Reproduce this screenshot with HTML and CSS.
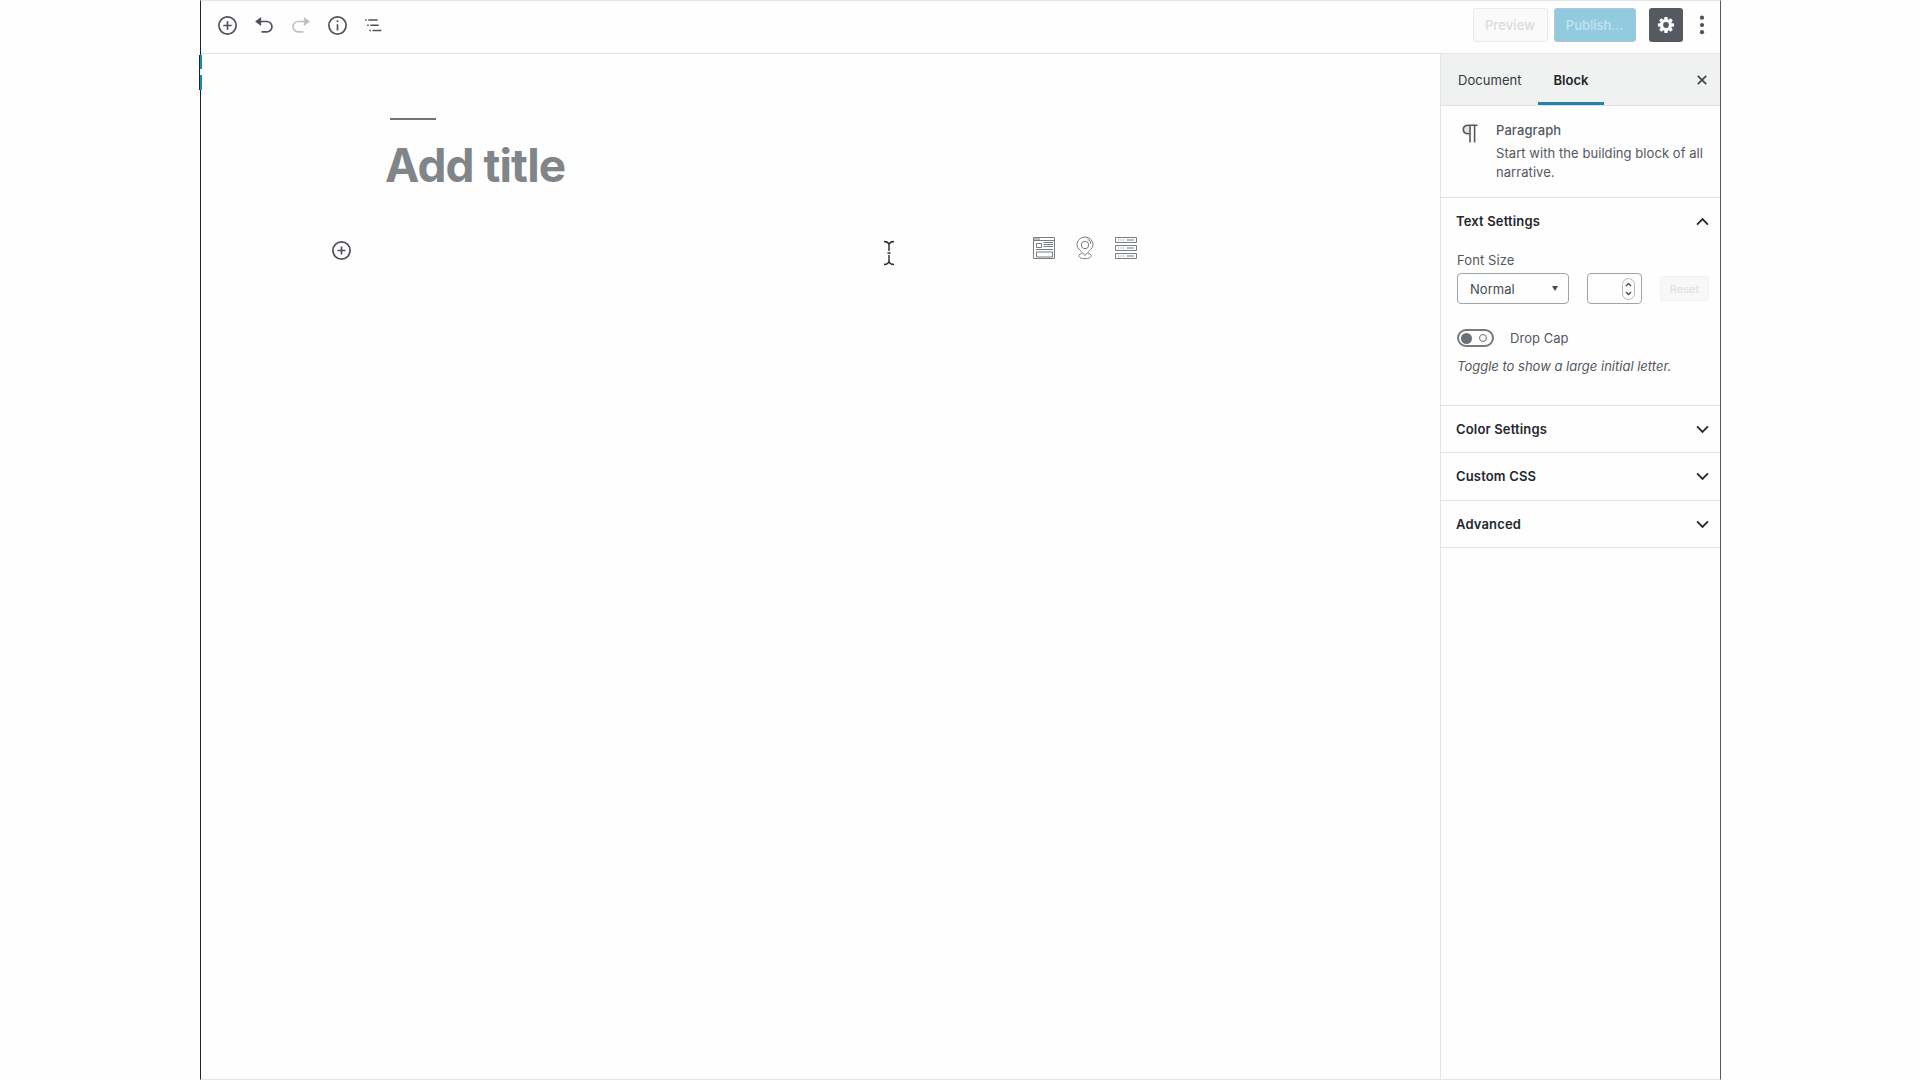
FILE: index.html
```html
<!DOCTYPE html>
<html lang="en">
<head>
<meta charset="utf-8">
<title>Add title</title>
<link rel="stylesheet" href="styles.css">
</head>
<body>
<div class="window">
  <span class="menu-marker"></span>
  <header class="toolbar">
    <div class="tools">
      <svg class="icon" viewBox="0 0 20 20"><circle cx="10" cy="10" r="8.2"/><path d="M10 6v8M6 10h8"/></svg>
      <svg class="icon" viewBox="0 0 20 20"><path d="M5 6.2h7.2a4.9 4.9 0 0 1 0 9.8H7.2"/><path class="fill" d="M1 6.2 6.8 2v8.4z"/></svg>
      <svg class="icon faded" viewBox="0 0 20 20"><path d="M15 6.2H7.8a4.9 4.9 0 0 0 0 9.8h5"/><path class="fill" d="M19 6.2 13.2 2v8.4z"/></svg>
      <svg class="icon" viewBox="0 0 20 20"><circle cx="10" cy="10" r="8.2"/><path d="M10 8.8v6M10 5v2"/></svg>
      <svg class="icon" viewBox="0 0 20 20"><path class="list" d="M2 4.7h1.5M5 4.7h9M4 9.7h1.5M7 9.7h8M6 14.8h1.5M9 14.8h8.5"/></svg>
    </div>
    <div class="actions">
      <button class="preview">Preview</button>
      <button class="publish">Publish...</button>
      <button class="gear"><svg viewBox="0 0 20 20"><g fill="#fff"><circle cx="10" cy="10" r="6.7"/><path d="M8.3 1h3.4l.5 4H7.8zM8.3 19h3.4l.5-4H7.8zM1 8.3v3.4l4 .5V7.8zM19 8.3v3.4l-4 .5V7.8z"/><path transform="rotate(45 10 10)" d="M8.3 1h3.4l.5 4H7.8zM8.3 19h3.4l.5-4H7.8zM1 8.3v3.4l4 .5V7.8zM19 8.3v3.4l-4 .5V7.8z"/></g><circle cx="10" cy="10" r="3.2" fill="#555960"/></svg></button>
      <svg class="dots" viewBox="0 0 6 20"><circle cx="3" cy="2.7" r="2.1"/><circle cx="3" cy="10" r="2.1"/><circle cx="3" cy="17.2" r="2.1"/></svg>
    </div>
  </header>
  <div class="body">
    <main class="canvas">
      <div class="rule"></div>
      <h1>Add title</h1>
      <div class="block-row">
        <svg class="icon inserter" viewBox="0 0 20 20"><circle cx="10" cy="10" r="8.2"/><path d="M10 6.2v7.6M6.2 10h7.6"/></svg>
        <div class="suggestions">
          <svg viewBox="0 0 24 24"><path d="M1.500 1.500h21v21h-21zM1.500 4.500h21M3 2v2M5 2v2M7 2v2M4.500 7.500h5v4h-5zM11.500 6.500H21M11.500 8.500H21M11.500 10.500H21M4 13.500h17M4.500 16h16v5h-16z"/></svg>
          <svg viewBox="0 0 24 24"><path d="M12 19.500C9 15.500 4 13 4 8.500a8 7.500 0 0 1 16 0c0 4.500-5 7-8 11zM14.500 3a6 6 0 0 1 3.500 5M9 17.500c-5 .8-4 5.200 3 5.200s8-4.400 3-5.200"/><circle cx="12" cy="9" r="3.7"/></svg>
          <svg viewBox="0 0 24 24"><path d="M1.500 1.500h21v5h-21zM1.500 9.500h21v5h-21zM1.500 17.500h21v5h-21zM4 4h1M6.500 4h1M9 4h1M12.500 4H20M4 12h1M6.500 12h1M9 12h1M12.500 12H20M4 20h1M6.500 20h1M9 20h1M12.500 20H20"/></svg>
        </div>
      </div>
      <svg class="cursor" viewBox="0 0 12 26"><path d="M1 1.500q4 0 5 3 1-3 5-3M6 4v7M6 15v7M1 24.500q4 0 5-3 1 3 5 3M4.500 13h3"/></svg>
    </main>
    <aside class="sidebar">
      <nav class="tabs">
        <span class="tab">Document</span>
        <span class="tab active">Block</span>
        <svg class="close" viewBox="0 0 12 12"><path d="m1.800 1.800 8.400 8.400M10.200 1.800l-8.400 8.400"/></svg>
      </nav>
      <section class="card">
        <svg class="pilcrow" viewBox="0 0 16 19"><path class="fill" d="M7 1v9.500C2.800 10.500.5 8.500.5 5.600S2.800 1 7 1z" fill-opacity=".15"/><path d="M15.500 1.300H6.500C3 1.300 1.300 3 1.300 5.500s1.700 4.300 5.700 4.300M8 1.300V18.500M12.600 1.300V18.500"/></svg>
        <div>
          <div class="name">Paragraph</div>
          <p>Start with the building block of all<br>narrative.</p>
        </div>
      </section>
      <section class="panel open">
        <div class="heading"><span>Text Settings</span><svg class="chevron" viewBox="0 0 12 8"><path d="m1 6.800 5-5 5 5"/></svg></div>
        <div class="label">Font Size</div>
        <div class="size-row">
          <div class="select"><span>Normal</span><svg viewBox="0 0 6 5"><path d="M0 0h6L3 5z"/></svg></div>
          <div class="number"><svg viewBox="0 0 13 22"><rect x=".5" y=".5" width="12" height="21" rx="6"/><path d="m4 8 2.500-2.500L9 8M4 14l2.500 2.500L9 14"/></svg></div>
          <button class="reset">Reset</button>
        </div>
        <div class="toggle-row"><span class="toggle"></span><span>Drop Cap</span></div>
        <div class="hint">Toggle to show a large initial letter.</div>
      </section>
      <section class="panel"><div class="heading"><span>Color Settings</span><svg class="chevron" viewBox="0 0 12 8"><path d="m1 1.200 5 5 5-5"/></svg></div></section>
      <section class="panel"><div class="heading"><span>Custom CSS</span><svg class="chevron" viewBox="0 0 12 8"><path d="m1 1.200 5 5 5-5"/></svg></div></section>
      <section class="panel"><div class="heading"><span>Advanced</span><svg class="chevron" viewBox="0 0 12 8"><path d="m1 1.200 5 5 5-5"/></svg></div></section>
    </aside>
  </div>
</div>
</body>
</html>
```
FILE: styles.css
```css
* { box-sizing: border-box; }
body { margin: 0; background: #fefefe; font-family: Inter, "Liberation Sans", sans-serif; font-size: 13px; letter-spacing: .04px; color: #53585f; }
svg { display: block; flex: none; fill: none; }
button { font: inherit; padding: 0; border-radius: 3px; }
.window { position: relative; width: 1521px; height: 1080px; margin-left: 200px; border: 1px solid #e2e4e7; border-left-color: #23202e; border-right-color: #555a60; display: flex; flex-direction: column; }
.menu-marker { position: absolute; left: -2px; top: 54px; width: 3px; height: 35px; border-left: 1px solid #23202e; background: linear-gradient(#168cbe 14px, #fff 14px, #fff 20px, #168cbe 20px); }
.toolbar { height: 53px; border-bottom: 1px solid #e2e4e7; display: flex; justify-content: space-between; align-items: flex-start; padding: 7px 15px 0 16px; }
.tools { display: flex; gap: 15.6px; padding-top: 7px; }
.icon { width: 21px; height: 21px; stroke: #4d5258; stroke-width: 1.6; }
.icon .fill { fill: #4d5258; stroke: none; }
.faded { opacity: .35; }
.list { stroke-width: 1.4; }
.actions { display: flex; align-items: center; }
.preview { width: 75px; height: 34px; border: 1px solid #e8eaeb; background: #fafafa; color: #d9dcdc; font-weight: 500; letter-spacing: .1px; }
.publish { width: 82px; height: 34px; margin-left: 6px; border: 1px solid #a9c9d4; background: #92cbe0; color: #c2e5f1; font-weight: 500; }
.gear { width: 34px; height: 34px; margin-left: 13px; border: 0; background: #555960; display: grid; place-items: center; }
.gear svg { width: 18px; height: 18px; }
.dots { width: 6px; height: 20px; margin-left: 16.5px; fill: #4d5258; }
.body { flex: 1; display: flex; min-height: 0; }
.canvas { flex: 1; position: relative; padding-top: 64px; }
.rule { width: 46px; height: 2px; margin-left: 189px; background: #70757b; }
h1 { margin: 18px 0 0 184px; font-size: 46px; line-height: 54px; font-weight: 700; letter-spacing: -.9px; color: #7f8588; }
.block-row { display: flex; justify-content: space-between; align-items: flex-start; margin: 44px 302px 0 130px; }
.inserter { margin-top: 4px; }
.suggestions { display: flex; gap: 17px; }
.suggestions svg { width: 24px; height: 24px; stroke: #777d82; stroke-width: 1; }
.cursor { position: absolute; left: 682px; top: 186px; width: 12px; height: 26px; stroke: #24272b; stroke-width: 1.4; }
.sidebar { width: 280px; border-left: 1px solid #e2e4e7; }
.tabs { display: flex; height: 51.5px; align-items: stretch; background: #f0f1f1; border-bottom: 1px solid #dfe2e4; color: #34383d; }
.tab { line-height: 52px; padding-left: 17px; width: 97px; }
.tab.active { width: 66px; padding: 0; text-align: center; font-weight: 600; color: #222529; border-bottom: 3px solid #2581ab; }
.close { width: 12px; height: 12px; margin: 20px 0 0 92px; stroke: #3f464d; stroke-width: 1.7; }
.card { height: 92.5px; display: flex; border-bottom: 1px solid #e2e4e7; padding: 15.5px 0 0 21px; }
.pilcrow { width: 16px; height: 19px; margin: 3px 18px 0 0; stroke: #53585f; stroke-width: 1.6; }
.pilcrow .fill { fill: #53585f; stroke: none; }
.name { font-weight: 500; line-height: 18px; letter-spacing: .1px; }
.card p { margin: 5px 0 0; line-height: 18.5px; white-space: nowrap; letter-spacing: .06px; }
.panel { height: 47.3px; border-bottom: 1px solid #e2e4e7; padding: 0 11px 0 16px; }
.panel.open { height: 208px; }
.heading { height: 47px; margin-left: -1px; display: flex; justify-content: space-between; align-items: center; font-weight: 600; color: #23282d; letter-spacing: .16px; }
.heading span { padding-bottom: 1px; }
.chevron { width: 13px; height: 9px; stroke: #23282d; stroke-width: 1.7; }
.label { margin-top: 6px; line-height: 18px; letter-spacing: .1px; }
.size-row { display: flex; align-items: center; margin-top: 4px; }
.select { width: 112px; height: 31px; border: 1px solid #a0a4a7; border-radius: 4px; display: flex; align-items: center; justify-content: space-between; padding: 0 10px 0 12px; color: #444b52; }
.select svg { width: 6px; height: 5px; fill: #444b52; }
.number { width: 55px; height: 31px; margin-left: 18px; border: 1px solid #a0a4a7; border-radius: 4px; display: flex; align-items: center; justify-content: flex-end; padding-right: 6px; }
.number svg { width: 13px; height: 22px; stroke: #b7bbbe; }
.number path { stroke: #444b52; stroke-width: 1.3; }
.reset { width: 49px; height: 25px; margin-left: 18px; border: 1px solid #f0f1f1; background: #f8f8f8; color: #dfe1e2; font-size: 11px; font-weight: 500; }
.toggle-row { display: flex; align-items: center; gap: 16px; margin-top: 25px; height: 18px; }
.toggle { width: 37px; height: 18px; border: 2px solid #767b80; border-radius: 9px; display: flex; align-items: center; justify-content: space-between; padding: 0 5px 0 2px; }
.toggle::before { content: ""; width: 11px; height: 11px; border-radius: 50%; background: #6c7176; }
.toggle::after { content: ""; width: 6px; height: 6px; border-radius: 50%; border: 1px solid #6c7176; }
.hint { margin-top: 10px; line-height: 18px; font-style: italic; letter-spacing: 0; }
```
